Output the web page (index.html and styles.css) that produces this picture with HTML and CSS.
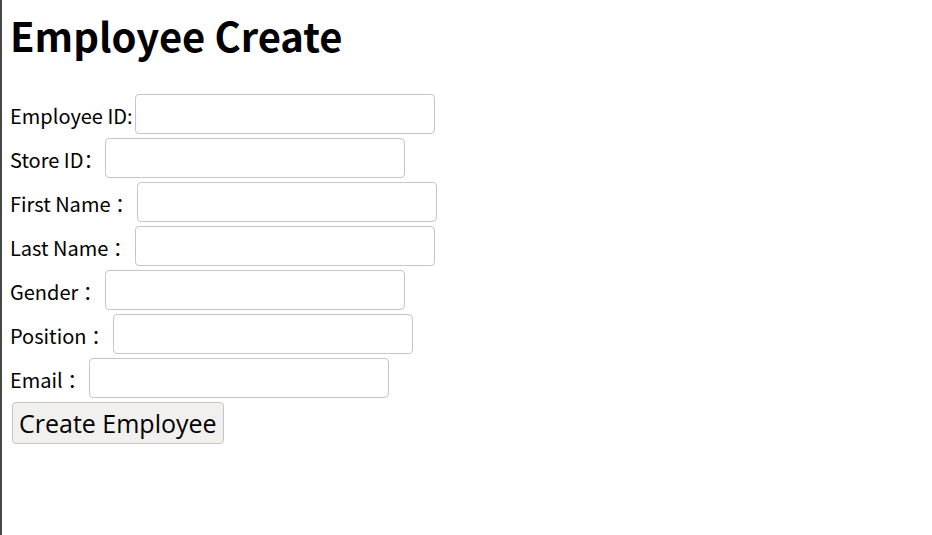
FILE: index.html
```html
<!DOCTYPE html>
<html lang="en">
<head>
<meta charset="utf-8">
<title>Employee Create</title>
<link rel="stylesheet" href="styles.css">
</head>
<body>
<h1 class="title">Employee Create</h1>
<form class="form">
  <div class="row"><label for="eid">Employee ID:</label><input id="eid" class="field" type="text"></div>
  <div class="row"><label for="sid">Store ID：</label><input id="sid" class="field" type="text"></div>
  <div class="row"><label for="fn">First Name ：</label><input id="fn" class="field" type="text"></div>
  <div class="row"><label for="ln">Last Name ：</label><input id="ln" class="field" type="text"></div>
  <div class="row"><label for="gd">Gender ：</label><input id="gd" class="field" type="text"></div>
  <div class="row"><label for="ps">Position ：</label><input id="ps" class="field" type="text"></div>
  <div class="row"><label for="em">Email ：</label><input id="em" class="field" type="email"></div>
  <div class="actions"><button class="btn" type="submit">Create Employee</button></div>
</form>
</body>
</html>
```
FILE: styles.css
```css
html {
  border-left: 2px solid #474747;
  min-height: 100%;
  box-sizing: border-box;
}
body {
  margin: 8px;
  font-family: "Noto Sans CJK SC", sans-serif;
  font-size: 20px;
  color: #000;
  background: #fff;
}
.title {
  font-size: 40px;
  font-weight: 700;
  margin: 0 0 33px;
  padding-top: 3px;
  line-height: 48px;
}
.row {
  height: 44px;
  line-height: 48px;
}
.field {
  width: 300px;
  height: 40px;
  margin: 2px;
  box-sizing: border-box;
  border: 1px solid #c9c5c1;
  border-radius: 4px;
  vertical-align: top;
  padding: 0 6px;
  font-size: 16px;
  background: #fff;
}
.actions {
  display: flex;
}
.btn {
  font-family: "Open Sans", sans-serif;
  font-size: 25px;
  height: 42px;
  padding: 0 6px;
  margin: 2px;
  border: 1px solid #c9c5c1;
  border-radius: 4px;
  background: #f1f0ef;
  color: #000;
}
```
